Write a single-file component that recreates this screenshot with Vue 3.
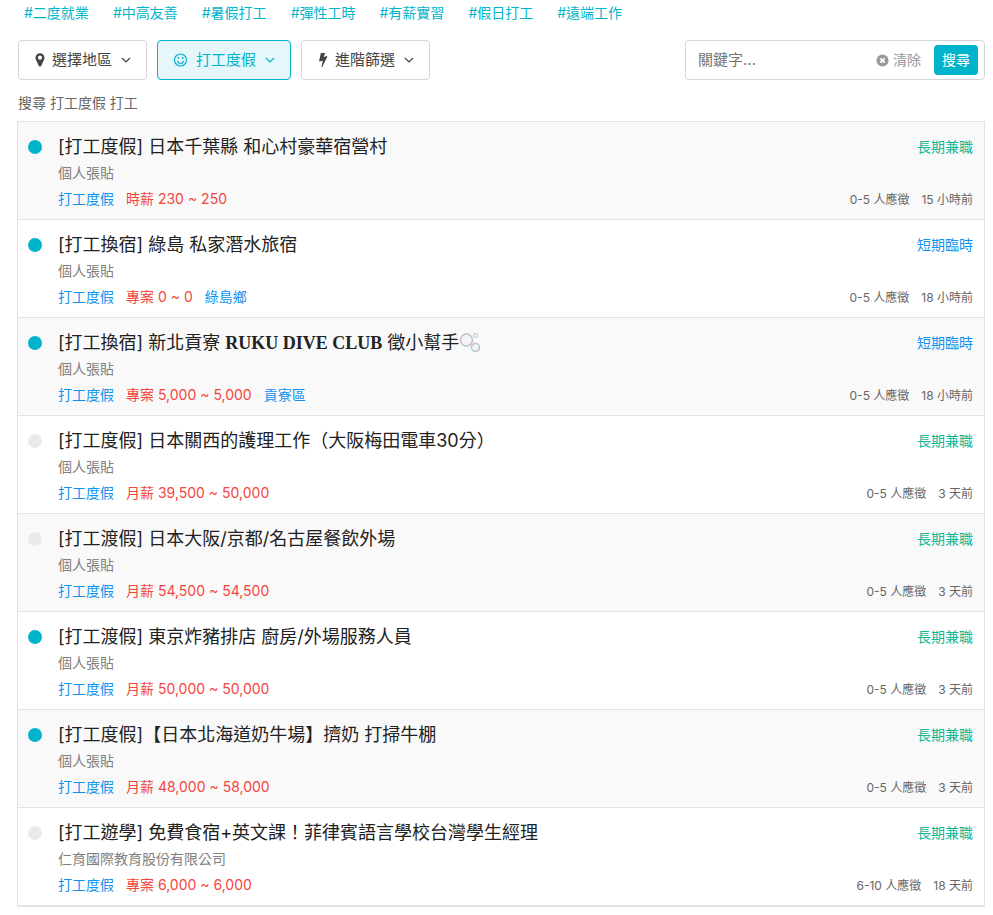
<template>
  <main class="job-search">
    <nav class="tags">
      <a
        v-for="tag in tags"
        :key="tag"
        href="#"
        class="tag"
      >#{{ tag }}</a>
    </nav>

    <div class="toolbar">
      <div class="filters">
        <button
          type="button"
          class="filter-btn"
        >
          <svg
            class="icon"
            viewBox="1 0 12 14"
            aria-hidden="true"
          >
            <path
              fill="currentColor"
              fill-rule="evenodd"
              d="M7 0.2a4.5 4.5 0 0 0-4.5 4.5c0 1 .3 1.7.7 2.5l2.7 5.8c.4 1 1.8 1 2.2 0l2.7-5.8c.4-.8.7-1.5.7-2.5A4.5 4.5 0 0 0 7 .2zM7 2.6a2.1 2.1 0 1 1 0 4.2 2.1 2.1 0 0 1 0-4.2z"
            />
          </svg>
          <span>選擇地區</span>
          <svg
            class="chevron"
            viewBox="0 0 10 10"
            aria-hidden="true"
          >
            <path d="M1 3l4 4 4-4" />
          </svg>
        </button>
        <button
          type="button"
          class="filter-btn active"
        >
          <svg
            class="icon wide"
            viewBox="0 0 14 14"
            aria-hidden="true"
          >
            <g
              fill="none"
              stroke="currentColor"
              stroke-width="1.2"
            >
              <circle
                cx="7"
                cy="7"
                r="6"
              />
              <path
                d="M4 8.3c.5 1.4 1.6 2.2 3 2.2s2.5-.8 3-2.2"
                stroke-linecap="round"
              />
            </g>
            <circle
              cx="4.9"
              cy="5"
              r="1"
              fill="currentColor"
            />
            <circle
              cx="9.1"
              cy="5"
              r="1"
              fill="currentColor"
            />
          </svg>
          <span>打工度假</span>
          <svg
            class="chevron"
            viewBox="0 0 10 10"
            aria-hidden="true"
          >
            <path d="M1 3l4 4 4-4" />
          </svg>
        </button>
        <button
          type="button"
          class="filter-btn"
        >
          <svg
            class="icon"
            viewBox="1 0 12 14"
            aria-hidden="true"
          >
            <path
              fill="currentColor"
              d="M5.2 0h4L7.6 3.9l3.3-.8c.3 0 .5.2.4.5L6.3 14H5.4l1.5-6.3-3.4.8c-.3 0-.5-.2-.4-.5L4.8.3c0-.2.2-.3.4-.3z"
            />
          </svg>
          <span>進階篩選</span>
          <svg
            class="chevron"
            viewBox="0 0 10 10"
            aria-hidden="true"
          >
            <path d="M1 3l4 4 4-4" />
          </svg>
        </button>
      </div>

      <form
        class="search"
        @submit.prevent
      >
        <input
          v-model="keyword"
          class="search-input"
          type="text"
          placeholder="關鍵字..."
          aria-label="關鍵字"
        >
        <button
          type="button"
          class="clear-btn"
          @click="keyword = ''"
        >
          <svg
            viewBox="0 0 14 14"
            aria-hidden="true"
          >
            <circle
              cx="7"
              cy="7"
              r="6.5"
              fill="currentColor"
            />
            <path
              d="M4.7 4.7l4.6 4.6M9.3 4.7L4.7 9.3"
              stroke="#fff"
              stroke-width="2"
            />
          </svg>
          清除
        </button>
        <button
          type="submit"
          class="search-btn"
        >
          搜尋
        </button>
      </form>
    </div>

    <h1 class="summary">
      搜尋 打工度假 打工
    </h1>

    <ul class="jobs">
      <li
        v-for="job in jobs"
        :key="job.title"
        class="job"
      >
        <span
          class="dot"
          :class="{ on: job.active }"
        />
        <div class="job-body">
          <div class="line">
            <h2 class="title">
              {{ job.title }}<template v-if="job.club">
                {{ ' ' }}<b class="club">{{ job.club }}</b> {{ job.rest }}<svg
                  class="bubbles"
                  viewBox="0 0 22 22"
                  aria-hidden="true"
                >
                  <defs>
                    <linearGradient
                      id="bubble"
                      x1="0"
                      y1="0"
                      x2="1"
                      y2="1"
                    >
                      <stop
                        offset="0"
                        stop-color="#a3bdd2"
                      />
                      <stop
                        offset=".35"
                        stop-color="#e2b9c6"
                      />
                      <stop
                        offset=".6"
                        stop-color="#9fd0dc"
                      />
                      <stop
                        offset="1"
                        stop-color="#d3a9ba"
                      />
                    </linearGradient>
                  </defs>
                  <g
                    fill="#f4f4f7"
                    stroke="url(#bubble)"
                    stroke-width="1.5"
                  >
                    <circle
                      cx="7.5"
                      cy="8"
                      r="6"
                    />
                    <circle
                      cx="16.5"
                      cy="15.5"
                      r="4"
                    />
                    <circle
                      cx="16.5"
                      cy="3.5"
                      r="2"
                      stroke-width="1"
                    />
                  </g>
                </svg>
              </template>
            </h2>
            <span
              class="type"
              :class="{ short: job.short }"
            >{{ job.short ? '短期臨時' : '長期兼職' }}</span>
          </div>
          <div class="line company">
            {{ job.company || '個人張貼' }}
          </div>
          <div class="line details">
            <div class="meta">
              <a href="#">打工度假</a>
              <span class="salary">{{ job.salary }}</span>
              <a
                v-if="job.area"
                href="#"
              >{{ job.area }}</a>
            </div>
            <div class="stats">
              <span>{{ job.applicants || '0-5' }} 人應徵</span>
              <span>{{ job.time }}</span>
            </div>
          </div>
        </div>
      </li>
    </ul>
  </main>
</template>

<script setup>
import { ref } from 'vue';

const keyword = ref('');

const tags = ['二度就業', '中高友善', '暑假打工', '彈性工時', '有薪實習', '假日打工', '遠端工作'];

const jobs = [
  { title: '[打工度假] 日本千葉縣 和心村豪華宿營村', salary: '時薪 230 ~ 250', time: '15 小時前', active: true },
  { title: '[打工換宿] 綠島 私家潛水旅宿', salary: '專案 0 ~ 0', area: '綠島鄉', time: '18 小時前', active: true, short: true },
  { title: '[打工換宿] 新北貢寮', club: 'RUKU DIVE CLUB', rest: '徵小幫手', salary: '專案 5,000 ~ 5,000', area: '貢寮區', time: '18 小時前', active: true, short: true },
  { title: '[打工度假] 日本關西的護理工作（大阪梅田電車30分）', salary: '月薪 39,500 ~ 50,000', time: '3 天前' },
  { title: '[打工渡假] 日本大阪/京都/名古屋餐飲外場', salary: '月薪 54,500 ~ 54,500', time: '3 天前' },
  { title: '[打工渡假] 東京炸豬排店 廚房/外場服務人員', salary: '月薪 50,000 ~ 50,000', time: '3 天前', active: true },
  { title: '[打工度假]【日本北海道奶牛場】擠奶 打掃牛棚', salary: '月薪 48,000 ~ 58,000', time: '3 天前', active: true },
  { title: '[打工遊學] 免費食宿+英文課！菲律賓語言學校台灣學生經理', company: '仁育國際教育股份有限公司', salary: '專案 6,000 ~ 6,000', applicants: '6-10', time: '18 天前' }
];
</script>

<style>
body {
  margin: 0;
  background-color: #fff;
}
</style>

<style scoped>
.job-search {
  padding: 0 8px 8px 17px;
  font-family: Inter, "Noto Sans CJK TC", sans-serif;
  font-size: 14px;
  color: #222;
}

a {
  color: #0f93f0;
  text-decoration: none;
}

button,
input {
  font-family: inherit;
  line-height: 20px;
}

button {
  cursor: pointer;
}

.tags {
  display: flex;
  gap: 24px;
  padding: 0 7px;
  line-height: 26px;
}

.tag {
  color: #00b4cb;
}

.toolbar {
  display: flex;
  justify-content: space-between;
  margin-top: 14px;
  padding-left: 1px;
}

.filters {
  display: flex;
  gap: 10px;
}

.filter-btn {
  display: flex;
  align-items: center;
  height: 40px;
  padding: 0 15px;
  background-color: #fff;
  color: #444;
  border: 1px solid #d6d6d6;
  border-radius: 4px;
  font-size: 15px;
}

.filter-btn.active {
  background-color: #e5f7fa;
  color: #00b4cb;
  border-color: #00b4cb;
}

.icon {
  width: 12px;
  height: 14px;
  margin-right: 6px;
}

.icon.wide {
  width: 15px;
  margin-right: 8px;
}

.chevron {
  width: 10px;
  height: 10px;
  margin-left: 9px;
  fill: none;
  stroke: currentColor;
  stroke-width: 1.2;
}

.search {
  display: flex;
  align-items: center;
  box-sizing: border-box;
  width: 300px;
  height: 40px;
  padding: 0 6px 0 12px;
  border: 1px solid #d6d6d6;
  border-radius: 4px;
}

.search-input {
  flex: 1;
  min-width: 0;
  padding: 0;
  border: 0;
  outline: 0;
  font-size: 15px;
}

.search-input::placeholder {
  color: #757575;
}

.clear-btn {
  display: flex;
  align-items: center;
  gap: 4px;
  margin-right: 13px;
  padding: 0;
  background: none;
  color: #999;
  border: 0;
  font-size: 14px;
}

.clear-btn svg {
  width: 13px;
  height: 13px;
}

.search-btn {
  height: 30px;
  padding: 0 8px;
  background-color: #00b4cb;
  color: #fff;
  border: 0;
  border-radius: 4px;
  font-size: 14px;
}

.summary {
  margin: 10px 0 5px;
  padding-left: 1px;
  color: #666;
  font-size: 14px;
  font-weight: 400;
  line-height: 26px;
}

.jobs {
  margin: 0;
  padding: 0;
  list-style: none;
  border: 1px solid #e2e2e2;
}

.job {
  display: flex;
  padding: 12px 11px 7px 10px;
  border-bottom: 1px solid #e2e2e2;
}

.job:nth-child(odd) {
  background-color: #f9f9f9;
}

.dot {
  width: 14px;
  height: 14px;
  margin: 6px 16px 0 0;
  background-color: #eaeaea;
  border-radius: 50%;
}

.dot.on {
  background-color: #00b4cb;
}

.job-body {
  flex: 1;
  min-width: 0;
}

.line {
  display: flex;
  justify-content: space-between;
  height: 26px;
  line-height: 26px;
}

.details {
  align-items: baseline;
}

.title {
  margin: 0;
  font-size: 18px;
  font-weight: 400;
}

.club {
  font-family: "Liberation Serif", serif;
}

.bubbles {
  width: 22px;
  height: 22px;
  vertical-align: -5px;
}

.type {
  color: #14b795;
}

.type.short {
  color: #0f93f0;
}

.company {
  color: #808080;
}

.meta,
.stats {
  display: flex;
  gap: 12px;
}

.salary {
  color: #f5453d;
}

.stats {
  color: #666;
  font-size: 12px;
}
</style>
